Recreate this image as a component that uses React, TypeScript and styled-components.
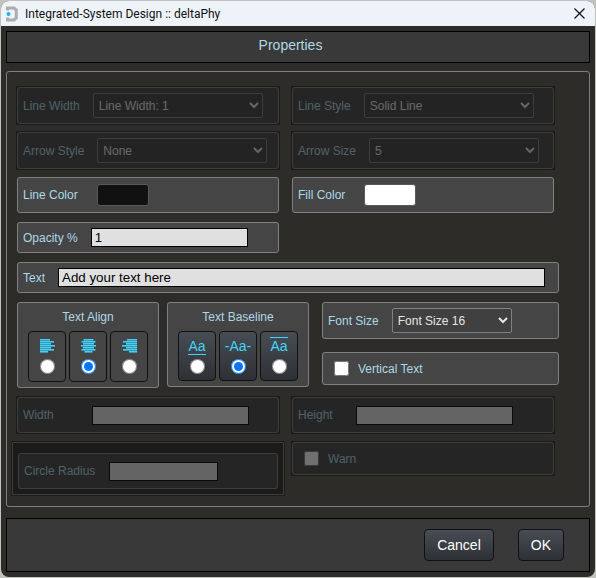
import React from "react";
import styled, { createGlobalStyle, css } from "styled-components";

const GlobalStyle = createGlobalStyle`
  *, *::before, *::after { box-sizing: border-box; }
  html, body, #root { height: 100%; }
  body {
    margin: 0;
    background: #c3c3bd;
    color: #add8e6;
    font: 12px/14px "Liberation Sans", Arial, sans-serif;
  }
`;

const Desktop = styled.div`
  min-height: 100%;
  display: flex;
  padding: 1px;
`;

const Dialog = styled.main`
  flex: 1;
  min-width: 0;
  display: flex;
  flex-direction: column;
  background: #2d2c28;
  border-radius: 8px;
  overflow: hidden;
`;

const TitleBar = styled.header`
  display: flex;
  align-items: center;
  height: 25px;
  padding: 0 8px 0 5px;
  gap: 7px;
  background: #eef3fa;
  color: #111;
  font: 12px/16px Roboto, "Noto Sans", sans-serif;
`;

const TitleText = styled.span`
  flex: 1;
`;

const CloseButton = styled.button`
  display: flex;
  padding: 2px;
  border: 0;
  background: none;
  color: #111;
`;

const Content = styled.form`
  flex: 1;
  display: flex;
  flex-direction: column;
  padding: 5px 5px;
`;

const Heading = styled.h1`
  margin: 0 0 8px;
  height: 32px;
  padding: 5px 15px 0 0;
  border: 1px solid #000;
  background: #393939;
  font-size: 14px;
  line-height: 16px;
  font-weight: 400;
  text-align: center;
`;

const Panel = styled.section`
  padding: 15px 30px 11px 10px;
  border: 1px solid #7f7f7f;
  border-radius: 3px;
`;

const Pair = styled.div<{ $gap?: number }>`
  display: grid;
  grid-template-columns: 1fr 1fr;
  align-items: start;
  column-gap: 13px;
  padding-right: 5px;
  margin-bottom: ${(p) => p.$gap ?? 8}px;
`;

const shade = css`
  &::after {
    content: "";
    position: absolute;
    inset: -2px;
    background: rgba(17, 17, 17, 0.6);
  }
`;

const Field = styled.fieldset<{ $height: number }>`
  position: relative;
  display: flex;
  align-items: center;
  min-width: 0;
  height: ${(p) => p.$height}px;
  margin: 0;
  padding: 0 13px 0 5px;
  border: 1px solid #808080;
  border-radius: 3px;
  background: #454545;
  &[inert] {
    ${shade}
  }
`;

const SelectBox = styled(Field)`
  padding-right: 5px;
`;

const FullRow = styled.div`
  margin-bottom: 9px;
`;

const NestedBox = styled.div`
  position: relative;
  margin: 0 -5px;
  padding: 10px 5px 5px;
  border: 1px solid #808080;
  ${shade}
`;

const NestedField = styled(Field)`
  &[inert]::after {
    content: none;
  }
`;

const Label = styled.label`
  white-space: nowrap;
`;

const Select = styled.select<{ $width: number }>`
  width: ${(p) => p.$width}px;
  height: 25px;
  margin: 0 0 0 13px;
  padding: 0 1px;
  border: 1px solid #808080;
  border-radius: 2px;
  background: #404040;
  color: #e6e6e6;
  font-family: inherit;
  font-size: 12px;
`;

const TextInput = styled.input<{ $width?: number; $indent: number }>`
  ${(p) => (p.$width ? `width: ${p.$width}px;` : "flex: 1; min-width: 0;")}
  height: 19px;
  margin: 0 0 0 ${(p) => p.$indent}px;
  padding: 1px 3px;
  border: 1px solid #000;
  border-radius: 0;
  background: #e0e0e0;
  color: #000;
  font-family: inherit;
`;

const Swatch = styled.button<{ $color: string }>`
  width: 52px;
  height: 22px;
  margin-left: 19px;
  border: 1px solid #5a5a5a;
  border-radius: 3px;
  background: ${(p) => p.$color};
`;

const Checkbox = styled.input`
  width: 15px;
  height: 15px;
  margin: 0 9px 0 6px;
`;

const StyleRow = styled.div`
  display: flex;
  align-items: flex-start;
  margin-bottom: 9px;
`;

const ChoiceGroup = styled.fieldset`
  width: 142px;
  min-width: 0;
  margin: 0 8px 0 0;
  padding: 7px 10px 5px;
  border: 1px solid #808080;
  border-radius: 3px;
  background: #454545;
`;

const ChoiceTitle = styled.div`
  margin-bottom: 7px;
  text-align: center;
`;

const Choices = styled.div`
  display: flex;
  gap: 3px;
`;

const Choice = styled.label<{ $raised?: boolean }>`
  flex: 1;
  display: flex;
  flex-direction: column;
  align-items: center;
  height: ${(p) => (p.$raised ? 50 : 51)}px;
  padding-top: 5px;
  border: 1px solid #111;
  border-radius: 4px;
  background: ${(p) => (p.$raised ? "linear-gradient(#484d55, #2d3135)" : "none")};
`;

const Glyph = styled.span<{ $line: string }>`
  height: 18px;
  margin-bottom: 4px;
  color: #40d4fa;
  font-size: 14px;
  line-height: 16px;
  border: 0 solid transparent;
  border-width: 1px 0;
  border-top-color: ${(p) => (p.$line === "top" ? "#40d4fa" : "transparent")};
  border-bottom-color: ${(p) => (p.$line === "bottom" ? "#40d4fa" : "transparent")};
`;

const AlignSvg = styled.svg`
  margin: 2px 0 6px;
`;

const Radio = styled.input`
  width: 15px;
  height: 15px;
  margin: 0 0 0 1px;
`;

const SideColumn = styled.div`
  flex: 1;
  display: grid;
  align-items: start;
  gap: 13px;
  margin-left: 5px;
`;

const Footer = styled.footer`
  display: flex;
  justify-content: flex-end;
  align-items: center;
  gap: 24px;
  height: 54px;
  margin-top: 11px;
  padding-right: 25px;
  border: 1px solid #000;
  background: #393939;
`;

const ActionButton = styled.button`
  height: 32px;
  padding: 0 12px;
  border: 1px solid #111;
  border-radius: 4px;
  background: linear-gradient(#484d55, #2d3135);
  color: #fff;
  font-family: inherit;
  font-size: 14px;
`;

const alignBars = [10, 14, 11, 15, 11, 14, 8];

function AlignIcon({ side }: { side: "left" | "center" | "right" }) {
  return (
    <AlignSvg width="15" height="14" viewBox="0 0 15 14" aria-hidden="true">
      {alignBars.map((w, i) => {
        const x = side === "left" ? 0 : side === "right" ? 15 - w : (15 - w) / 2;
        return (
          <g key={i} fill="#40d0fa">
            <rect x={x} y={i * 2} width={w} height="1" />
            <rect x={x} y={i * 2 + 1} width={w} height="1" opacity="0.6" />
          </g>
        );
      })}
    </AlignSvg>
  );
}

function SelectField(props: { id: string; label: string; value: string; width?: number; off?: boolean }) {
  return (
    <SelectBox $height={37} inert={props.off}>
      <Label htmlFor={props.id}>{props.label}</Label>
      <Select id={props.id} $width={props.width ?? 170}>
        <option>{props.value}</option>
      </Select>
    </SelectBox>
  );
}

export default function App() {
  return (
    <>
      <GlobalStyle />
      <Desktop>
        <Dialog>
          <TitleBar>
            <svg width="12" height="16" viewBox="0 0 12 16" aria-hidden="true">
              <path d="M1.5 4.5V2H8L10.3 4V12L8 14H1.5V11.5" fill="none" stroke="#adadad" strokeWidth="3" />
              <circle cx="2.5" cy="8" r="2" fill="#28aef5" />
            </svg>
            <TitleText>Integrated-System Design :: deltaPhy</TitleText>
            <CloseButton type="button" aria-label="Close">
              <svg width="11" height="11" viewBox="0 0 11 11" aria-hidden="true">
                <path d="M.5.5l10 10M10.5.5l-10 10" stroke="currentColor" strokeWidth="1.2" />
              </svg>
            </CloseButton>
          </TitleBar>
          <Content onSubmit={(e) => e.preventDefault()}>
            <Heading>Properties</Heading>
            <Panel>
              <Pair>
                <SelectField id="line-width" label="Line Width" value="Line Width: 1" off />
                <SelectField id="line-style" label="Line Style" value="Solid Line" off />
              </Pair>
              <Pair>
                <SelectField id="arrow-style" label="Arrow Style" value="None" off />
                <SelectField id="arrow-size" label="Arrow Size" value="5" off />
              </Pair>
              <Pair $gap={9}>
                <Field $height={36}>
                  <Label htmlFor="line-color">Line Color</Label>
                  <Swatch id="line-color" type="button" $color="#111" />
                </Field>
                <Field $height={36}>
                  <Label htmlFor="fill-color">Fill Color</Label>
                  <Swatch id="fill-color" type="button" $color="#fff" />
                </Field>
              </Pair>
              <Pair $gap={9}>
                <Field $height={31}>
                  <Label htmlFor="opacity">Opacity %</Label>
                  <TextInput id="opacity" $width={157} $indent={13} defaultValue="1" />
                </Field>
              </Pair>
              <FullRow>
                <Field $height={31}>
                  <Label htmlFor="text">Text</Label>
                  <TextInput id="text" $indent={13} defaultValue="Add your text here" />
                </Field>
              </FullRow>
              <StyleRow>
                <ChoiceGroup aria-label="Text Align">
                  <ChoiceTitle>Text Align</ChoiceTitle>
                  <Choices>
                    {(["left", "center", "right"] as const).map((side) => (
                      <Choice key={side}>
                        <AlignIcon side={side} />
                        <Radio type="radio" name="align" aria-label={side} defaultChecked={side === "center"} />
                      </Choice>
                    ))}
                  </Choices>
                </ChoiceGroup>
                <ChoiceGroup aria-label="Text Baseline">
                  <ChoiceTitle>Text Baseline</ChoiceTitle>
                  <Choices>
                    {["bottom", "middle", "top"].map((line) => (
                      <Choice key={line} $raised>
                        <Glyph $line={line}>{line === "middle" ? "-Aa-" : "Aa"}</Glyph>
                        <Radio type="radio" name="baseline" aria-label={line} defaultChecked={line === "middle"} />
                      </Choice>
                    ))}
                  </Choices>
                </ChoiceGroup>
                <SideColumn>
                  <SelectField id="font-size" label="Font Size" value="Font Size 16" width={120} />
                  <Field $height={33}>
                    <Checkbox id="vertical" type="checkbox" />
                    <Label htmlFor="vertical">Vertical Text</Label>
                  </Field>
                </SideColumn>
              </StyleRow>
              <Pair $gap={9}>
                <Field $height={36} inert>
                  <Label htmlFor="width">Width</Label>
                  <TextInput id="width" $width={157} $indent={38} />
                </Field>
                <Field $height={36} inert>
                  <Label htmlFor="height">Height</Label>
                  <TextInput id="height" $width={157} $indent={23} />
                </Field>
              </Pair>
              <Pair $gap={0}>
                <NestedBox>
                  <NestedField $height={36} inert>
                    <Label htmlFor="radius">Circle Radius</Label>
                    <TextInput id="radius" $width={109} $indent={14} />
                  </NestedField>
                </NestedBox>
                <Field $height={33} inert>
                  <Checkbox id="warn" type="checkbox" />
                  <Label htmlFor="warn">Warn</Label>
                </Field>
              </Pair>
            </Panel>
            <Footer>
              <ActionButton type="button">Cancel</ActionButton>
              <ActionButton type="submit">OK</ActionButton>
            </Footer>
          </Content>
        </Dialog>
      </Desktop>
    </>
  );
}
